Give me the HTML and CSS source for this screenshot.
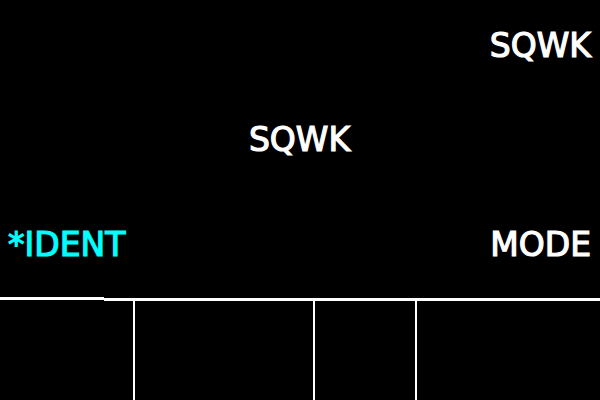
FILE: index.html
```html
<!DOCTYPE html>
<html>
<head>
<meta charset="utf-8">
<link rel="stylesheet" href="styles.css">
</head>
<body>
<div class="screen">
  <div class="top">
    <div class="row row-title"><span class="lbl">SQWK</span></div>
    <div class="row row-center"><span class="lbl">SQWK</span></div>
    <div class="row row-split"><span class="lbl cyan">*IDENT</span><span class="lbl">MODE</span></div>
  </div>
  <div class="rule"><span class="seg seg-left"></span><span class="seg seg-right"></span></div>
  <div class="keys">
    <div class="key k1"></div>
    <div class="key k2"></div>
    <div class="key k3"></div>
    <div class="key k4"></div>
  </div>
</div>
</body>
</html>
```

FILE: styles.css
```css
html, body {
  margin: 0;
  padding: 0;
  background: #000;
}
.screen {
  width: 600px;
  height: 400px;
  background: #000;
  display: flex;
  flex-direction: column;
  overflow: hidden;
  font-family: "DejaVu Sans", sans-serif;
  font-weight: normal;
  color: #fff;
}
.top {
  height: 297px;
  display: flex;
  flex-direction: column;
  padding: 29px 9px 0 8px;
  box-sizing: border-box;
}
.row {
  display: flex;
  height: 33px;
  font-size: 33px;
  line-height: 33px;
}
.row-title {
  justify-content: flex-end;
}
.row-center {
  justify-content: center;
  margin-top: 61px;
}
.row-split {
  justify-content: space-between;
  margin-top: 72px;
}
.lbl {
  white-space: nowrap;
  -webkit-text-stroke: 1.2px currentColor;
}
.cyan {
  color: #00ffff;
}
.rule {
  display: flex;
  height: 4px;
}
.seg {
  display: block;
  height: 3px;
  background: #fff;
}
.seg-left {
  width: 104px;
}
.seg-right {
  flex: 1;
  margin-top: 1px;
}
.keys {
  flex: 1;
  display: flex;
}
.key {
  height: 100%;
}
.k1 { width: 133px; }
.k2 { width: 178px; border-left: 2px solid #fff; }
.k3 { width: 100px; border-left: 2px solid #fff; }
.k4 { flex: 1; border-left: 2px solid #fff; }
```
